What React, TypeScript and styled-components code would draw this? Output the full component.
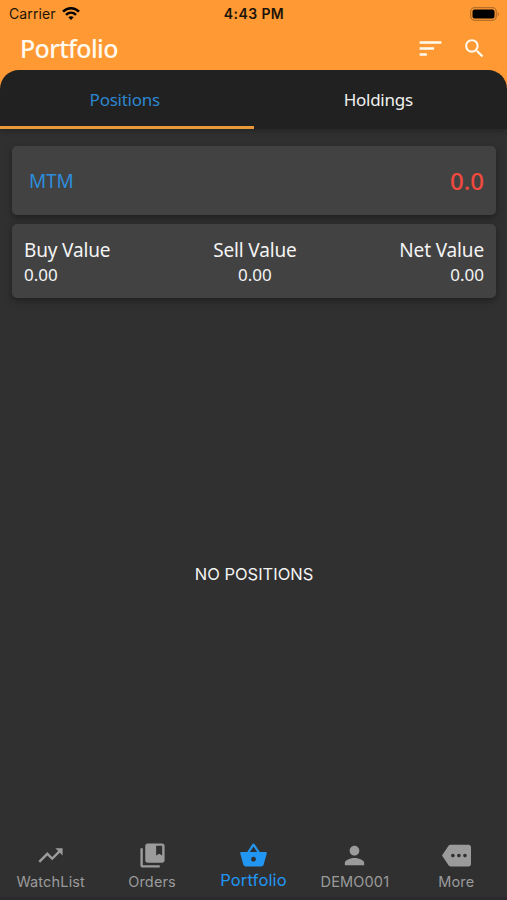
import React from "react";
import styled, { createGlobalStyle } from "styled-components";
import {
  MdCollectionsBookmark,
  MdMore,
  MdPerson,
  MdSearch,
  MdShoppingBasket,
  MdSort,
  MdTrendingUp,
} from "react-icons/md";
import type { IconType } from "react-icons";

const ui = `"Inter", "Liberation Sans", sans-serif`;
const brand = `"Noto Sans", "Open Sans", sans-serif`;

const GlobalStyle = createGlobalStyle`
  *, *::before, *::after { box-sizing: border-box; }
  body { margin: 0; background: #303030; }
`;

const Screen = styled.div`
  display: flex;
  flex-direction: column;
  height: 900px;
  width: 507px;
  overflow: hidden;
  background: #303030;
  color: #f4f4f4;
  font-family: ${brand};
`;

const Header = styled.header`
  flex: none;
  height: 129px;
  display: flex;
  flex-direction: column;
  color: #fffaf0;
  background: #ff9933;
  box-shadow: 0 2px 6px rgba(0, 0, 0, 0.25);
`;

const StatusBar = styled.div`
  display: grid;
  grid-template-columns: 1fr auto 1fr;
  align-items: center;
  height: 27px;
  padding: 0 7px 0 9px;
  color: #1c1409;
  font: 400 14px/20px ${ui};
`;

const Carrier = styled.div`
  display: flex;
  align-items: center;
  gap: 6px;
  letter-spacing: 0.1px;
`;

const Clock = styled.div`
  font-weight: 600;
  letter-spacing: 0.4px;
  margin-right: 1px;
`;

const Battery = styled.svg`
  justify-self: end;
`;

const TitleBar = styled.div`
  display: flex;
  align-items: center;
  height: 43px;
  padding: 0 20px 0 20px;
`;

const Title = styled.h1`
  flex: 1;
  margin: -2px 0 0;
  font-size: 25px;
  font-weight: 500;
  line-height: 32px;
  letter-spacing: -0.65px;
`;

const Actions = styled.div`
  display: flex;
  align-items: center;
  gap: 17px;
`;

const Tabs = styled.nav`
  display: flex;
  height: 59px;
  background: #212121;
  border-radius: 19px 19px 0 0;
  overflow: hidden;
`;

const Tab = styled.div<{ $active?: boolean }>`
  flex: 1;
  text-align: center;
  font-size: 17px;
  line-height: 24px;
  padding: 18px 4px 0 0;
  letter-spacing: -0.25px;
  color: ${(p) => (p.$active ? "#2e86cf" : "#f2f2f2")};
  border-bottom: 3px solid ${(p) => (p.$active ? "#e9983a" : "transparent")};
`;

const Content = styled.main`
  flex: 1;
  display: flex;
  flex-direction: column;
  padding: 17px 11px 0 12px;
`;

const Card = styled.section<{ $height: number }>`
  flex: none;
  display: flex;
  justify-content: space-between;
  height: ${(p) => p.$height}px;
  border-radius: 5px;
  background: #424242;
  box-shadow: 0 3px 7px rgba(0, 0, 0, 0.34);
`;

const MtmCard = styled(Card)`
  align-items: center;
  padding: 0 12px 0 17px;
  margin-bottom: 9px;
`;

const MtmLabel = styled.span`
  color: #2d8ddb;
  font-size: 19px;
  line-height: 26px;
  letter-spacing: -0.2px;
`;

const MtmValue = styled.span`
  color: #f04a3e;
  font-size: 24px;
  font-weight: 500;
  line-height: 32px;
`;

const ValuesCard = styled(Card)`
  padding: 13px 12px 0;
`;

const Value = styled.div<{ $align: string }>`
  text-align: ${(p) => p.$align};
`;

const ValueName = styled.div`
  font-size: 19px;
  line-height: 26px;
  letter-spacing: -0.15px;
`;

const ValueAmount = styled.div`
  font-size: 17px;
  line-height: 23px;
`;

const Empty = styled.div`
  flex: 1;
  display: flex;
  align-items: center;
  justify-content: center;
  padding-top: 10px;
  font: 400 16.5px/24px ${ui};
`;

const BottomNav = styled.nav`
  flex: none;
  display: grid;
  grid-template-columns: repeat(5, 1fr);
  height: 60px;
  padding-top: 1px;
  border-bottom: 3px solid #2b292b;
`;

const NavItem = styled.div<{ $active?: boolean }>`
  display: flex;
  flex-direction: column;
  align-items: center;
  color: ${(p) => (p.$active ? "#2196f3" : "#9b9b9b")};
  font: 400 ${(p) => (p.$active ? 16.5 : 14.5)}px/20px ${ui};
  white-space: nowrap;
  letter-spacing: 0.15px;

  span {
    margin-top: ${(p) => (p.$active ? 0 : 2)}px;
  }
`;

const navItems: { label: string; icon: IconType; active?: boolean }[] = [
  { label: "WatchList", icon: MdTrendingUp },
  { label: "Orders", icon: MdCollectionsBookmark },
  { label: "Portfolio", icon: MdShoppingBasket, active: true },
  { label: "DEMO001", icon: MdPerson },
  { label: "More", icon: MdMore },
];

const values = [
  { name: "Buy Value", amount: "0.00", align: "left" },
  { name: "Sell Value", amount: "0.00", align: "center" },
  { name: "Net Value", amount: "0.00", align: "right" },
];

const WifiIcon = () => (
  <svg width="18" height="14" viewBox="0 0 18 14" fill="none" stroke="#000" strokeWidth="2.5">
    <path d="M1 4.700C5.500.1 12.500.1 17 4.700" />
    <path d="M4 7.900C6.900 5.100 11.100 5.100 14 7.900" />
    <path d="M9 13.100L6.300 10.300Q9 8.200 11.700 10.300Z" fill="#000" stroke="none" />
  </svg>
);

const BatteryIcon = () => (
  <Battery width="30" height="14" viewBox="0 0 30 14">
    <rect x=".7" y=".7" width="25.600" height="12.600" rx="4" fill="none" stroke="#b56f29" strokeWidth="1.300" />
    <rect x="2.500" y="2.500" width="22" height="9" rx="2" fill="#000" />
    <path d="M27.800 4.700Q29.800 7 27.800 9.300Z" fill="#a96523" />
  </Battery>
);

export default function App() {
  return (
    <>
      <GlobalStyle />
      <Screen>
        <Header>
          <StatusBar>
            <Carrier>
              Carrier
              <WifiIcon />
            </Carrier>
            <Clock>4:43 PM</Clock>
            <BatteryIcon />
          </StatusBar>
          <TitleBar>
            <Title>Portfolio</Title>
            <Actions>
              <MdSort size={29} />
              <MdSearch size={25} />
            </Actions>
          </TitleBar>
          <Tabs>
            <Tab $active>Positions</Tab>
            <Tab>Holdings</Tab>
          </Tabs>
        </Header>
        <Content>
          <MtmCard $height={69}>
            <MtmLabel>MTM</MtmLabel>
            <MtmValue>0.0</MtmValue>
          </MtmCard>
          <ValuesCard $height={73.5}>
            {values.map((v) => (
              <Value key={v.name} $align={v.align}>
                <ValueName>{v.name}</ValueName>
                <ValueAmount>{v.amount}</ValueAmount>
              </Value>
            ))}
          </ValuesCard>
          <Empty>NO POSITIONS</Empty>
        </Content>
        <BottomNav>
          {navItems.map(({ label, icon: Icon, active }) => (
            <NavItem key={label} $active={active}>
              <Icon size={29} />
              <span>{label}</span>
            </NavItem>
          ))}
        </BottomNav>
      </Screen>
    </>
  );
}
